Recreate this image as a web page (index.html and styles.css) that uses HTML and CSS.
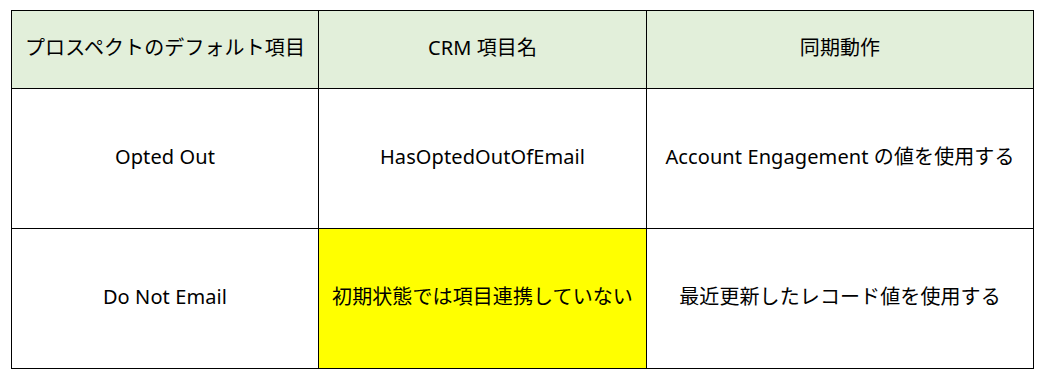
FILE: index.html
```html
<!DOCTYPE html>
<html lang="ja">
<head>
<meta charset="utf-8">
<link rel="stylesheet" href="styles.css">
</head>
<body>
<div class="grid">
  <div class="cell head">プロスペクトのデフォルト項目</div>
  <div class="cell head">CRM 項目名</div>
  <div class="cell head">同期動作</div>
  <div class="cell">Opted Out</div>
  <div class="cell">HasOptedOutOfEmail</div>
  <div class="cell">Account Engagement の値を使用する</div>
  <div class="cell">Do Not Email</div>
  <div class="cell warn">初期状態では項目連携していない</div>
  <div class="cell">最近更新したレコード値を使用する</div>
</div>
</body>
</html>
```
FILE: styles.css
```css
html, body {
  margin: 0;
  background: #ffffff;
}
body {
  padding: 10px 0 0 11px;
  font-family: "Noto Sans", "Noto Sans CJK JP", sans-serif;
  font-size: 20px;
  color: #000;
}
.grid {
  display: grid;
  grid-template-columns: 307px 328px 387px;
  grid-template-rows: 78px 140px 140px;
  width: max-content;
  border-top: 1px solid #000;
  border-left: 1px solid #000;
}
.cell {
  display: flex;
  align-items: center;
  justify-content: center;
  border-right: 1px solid #000;
  border-bottom: 1px solid #000;
  white-space: nowrap;
  line-height: 1.2;
  padding-bottom: 4px;
  letter-spacing: 0.1px;
}
.head {
  background: #e2efda;
  padding-bottom: 3px;
}
.warn {
  background: #ffff00;
}
```
